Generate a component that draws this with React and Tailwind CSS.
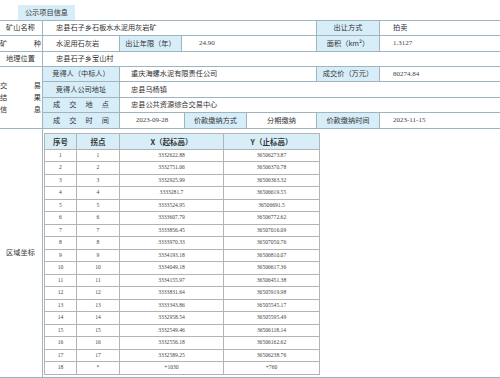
const points = [
  ['1', '1', '3332622.88', '36506273.87'],
  ['2', '2', '3332751.06', '36506370.78'],
  ['3', '3', '3332925.99', '36506363.32'],
  ['4', '4', '3333281.7', '36506619.55'],
  ['5', '5', '3333524.95', '36506691.5'],
  ['6', '6', '3333607.79', '36506772.62'],
  ['7', '7', '3333856.45', '36507016.09'],
  ['8', '8', '3333970.33', '36507050.76'],
  ['9', '9', '3334193.18', '36506810.07'],
  ['10', '10', '3334049.18', '36506617.36'],
  ['11', '11', '3334155.97', '36506451.38'],
  ['12', '12', '3333831.64', '36505919.98'],
  ['13', '13', '3333343.86', '36505545.17'],
  ['14', '14', '3332958.54', '36505595.49'],
  ['15', '15', '3332549.46', '36506118.14'],
  ['16', '16', '3332556.18', '36506162.62'],
  ['17', '17', '3332589.25', '36506238.76'],
  ['18', '*', '+1030', '+760'],
];

function Cell({ className = '', blue, children }) {
  return (
    <div
      className={`flex items-center border-r border-[#9eb4bf] h-full leading-none ${
        blue ? 'bg-[#d7eef9] justify-center' : ''
      } ${className}`}
    >
      {children}
    </div>
  );
}

function Row({ className = '', children }) {
  return <div className={`flex border-b border-[#9eb4bf] ${className}`}>{children}</div>;
}

const num = "font-['Liberation_Serif',serif] text-[7px] text-[#444]";

function Spread({ text, className = '' }) {
  return (
    <div className={`flex justify-between w-full ${className}`}>
      {text.split('').map((c, i) => (
        <span key={i}>{c}</span>
      ))}
    </div>
  );
}

export default function App() {
  return (
    <div className="w-[500px] h-[378px] bg-white overflow-hidden text-[7.2px] text-[#333] font-['Noto_Sans_CJK_SC',sans-serif]">
      <div className="h-[20px] flex items-end pl-[18px]">
        <div className="w-[57px] h-[15px] bg-[#d7eef9] flex items-center justify-center">公示项目信息</div>
      </div>

      <div className="ml-[-1px] w-[502px] border-t border-[#9eb4bf]">
        <Row className="h-[15px]">
          <Cell className="w-[44px] justify-center">矿山名称</Cell>
          <Cell className="w-[274px] pl-[13px]">忠县石子乡石板水水泥用灰岩矿</Cell>
          <Cell blue className="w-[63px]">出让方式</Cell>
          <Cell className="flex-1 pl-[13px]">拍卖</Cell>
        </Row>
        <Row className="h-[16px]">
          <Cell className="w-[44px]">
            <Spread text="矿种" className="pl-[1px] pr-[1px]" />
          </Cell>
          <Cell className="w-[77px] pl-[13px]">水泥用石灰岩</Cell>
          <Cell blue className="w-[62px]">出让年限（年）</Cell>
          <Cell className={`w-[135px] pl-[17px] ${num}`}>24.90</Cell>
          <Cell blue className="w-[63px]">面积（km²）</Cell>
          <Cell className={`flex-1 pl-[13px] ${num}`}>1.3127</Cell>
        </Row>
        <Row className="h-[15px]">
          <Cell className="w-[44px] justify-center">地理位置</Cell>
          <Cell className="flex-1 pl-[13px]">忠县石子乡宝山村</Cell>
        </Row>

        <div className="flex border-b border-[#9eb4bf]">
          <div className="w-[44px] border-r border-[#9eb4bf] flex flex-col justify-center gap-[5px] leading-none">
            <Spread text="交易" className="pl-[1px] pr-[1px]" />
            <Spread text="结果" className="pl-[1px] pr-[1px]" />
            <Spread text="信息" className="pl-[1px] pr-[1px]" />
          </div>
          <div className="flex-1 flex flex-col">
            <Row className="h-[15px]">
              <Cell blue className="w-[77px]">竞得人（中标人）</Cell>
              <Cell className="w-[197px] pl-[11px]">重庆海螺水泥有限责任公司</Cell>
              <Cell blue className="w-[63px]">成交价（万元）</Cell>
              <Cell className={`flex-1 pl-[13px] ${num}`}>80274.84</Cell>
            </Row>
            <Row className="h-[16px]">
              <Cell blue className="w-[77px]">竞得人公司地址</Cell>
              <Cell className="flex-1 pl-[11px]">忠县乌杨镇</Cell>
            </Row>
            <Row className="h-[15px]">
              <Cell blue className="w-[77px]">
                <Spread text="成交地点" className="px-[10px]" />
              </Cell>
              <Cell className="flex-1 pl-[11px]">忠县公共资源综合交易中心</Cell>
            </Row>
            <div className="flex h-[15px]">
              <Cell blue className="w-[77px]">
                <Spread text="成交时间" className="px-[10px]" />
              </Cell>
              <Cell className={`w-[65px] justify-center ${num}`}>2023-09-28</Cell>
              <Cell blue className="w-[62px]">价款缴纳方式</Cell>
              <Cell className="w-[70px] justify-center">分期缴纳</Cell>
              <Cell blue className="w-[63px]">价款缴纳时间</Cell>
              <Cell className={`flex-1 pl-[13px] ${num}`}>2023-11-15</Cell>
            </div>
          </div>
        </div>

        <Row className="h-[249px]">
          <Cell className="w-[44px] justify-center">区域坐标</Cell>
          <div className="flex-1 pl-[1px] pt-[4px]">
            <table className="border-collapse border border-[#8f8f8f] table-fixed leading-none">
              <colgroup>
                <col className="w-[32px]" />
                <col className="w-[43px]" />
                <col className="w-[104px]" />
                <col className="w-[96px]" />
              </colgroup>
              <thead>
                <tr className="h-[16px] bg-[#d7eef9] font-bold text-[7.5px]">
                  <th className="border border-[#b4b4b4] font-bold">序号</th>
                  <th className="border border-[#b4b4b4] font-bold">拐点</th>
                  <th className="border border-[#b4b4b4] font-bold">X（起标高）</th>
                  <th className="border border-[#b4b4b4] font-bold">Y（止标高）</th>
                </tr>
              </thead>
              <tbody className="font-['Liberation_Serif',serif] text-[5.6px] text-[#444]">
                {points.map((p, i) => (
                  <tr key={p[0]} className={i % 2 ? 'h-[13px]' : 'h-[12px]'}>
                    {p.map((v, j) => (
                      <td key={j} className="border border-[#b4b4b4] text-center p-0">
                        {v}
                      </td>
                    ))}
                  </tr>
                ))}
              </tbody>
            </table>
          </div>
        </Row>
      </div>
    </div>
  );
}
